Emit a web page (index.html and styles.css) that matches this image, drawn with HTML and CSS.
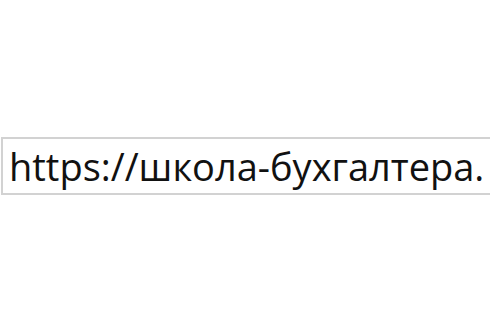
FILE: index.html
```html
<!DOCTYPE html>
<html>
<head>
<meta charset="utf-8">
<link rel="stylesheet" href="styles.css">
</head>
<body>
<div class="page">
  <div class="url-box"><span class="url-text">https://школа-бухгалтера.</span></div>
</div>
</body>
</html>
```
FILE: styles.css
```css
html, body {
  margin: 0;
  padding: 0;
  background: #ffffff;
  overflow: hidden;
}
.page {
  width: 490px;
  height: 334px;
  padding: 137px 0 0 1px;
  box-sizing: border-box;
}
.url-box {
  width: 489px;
  height: 58px;
  box-sizing: border-box;
  border: 2px solid #d2d2d2;
  border-right: none;
  padding-left: 6px;
  display: flex;
  align-items: center;
  white-space: nowrap;
  overflow: hidden;
}
.url-text {
  font-family: "Open Sans", sans-serif;
  font-size: 38px;
  color: #111111;
}
```
